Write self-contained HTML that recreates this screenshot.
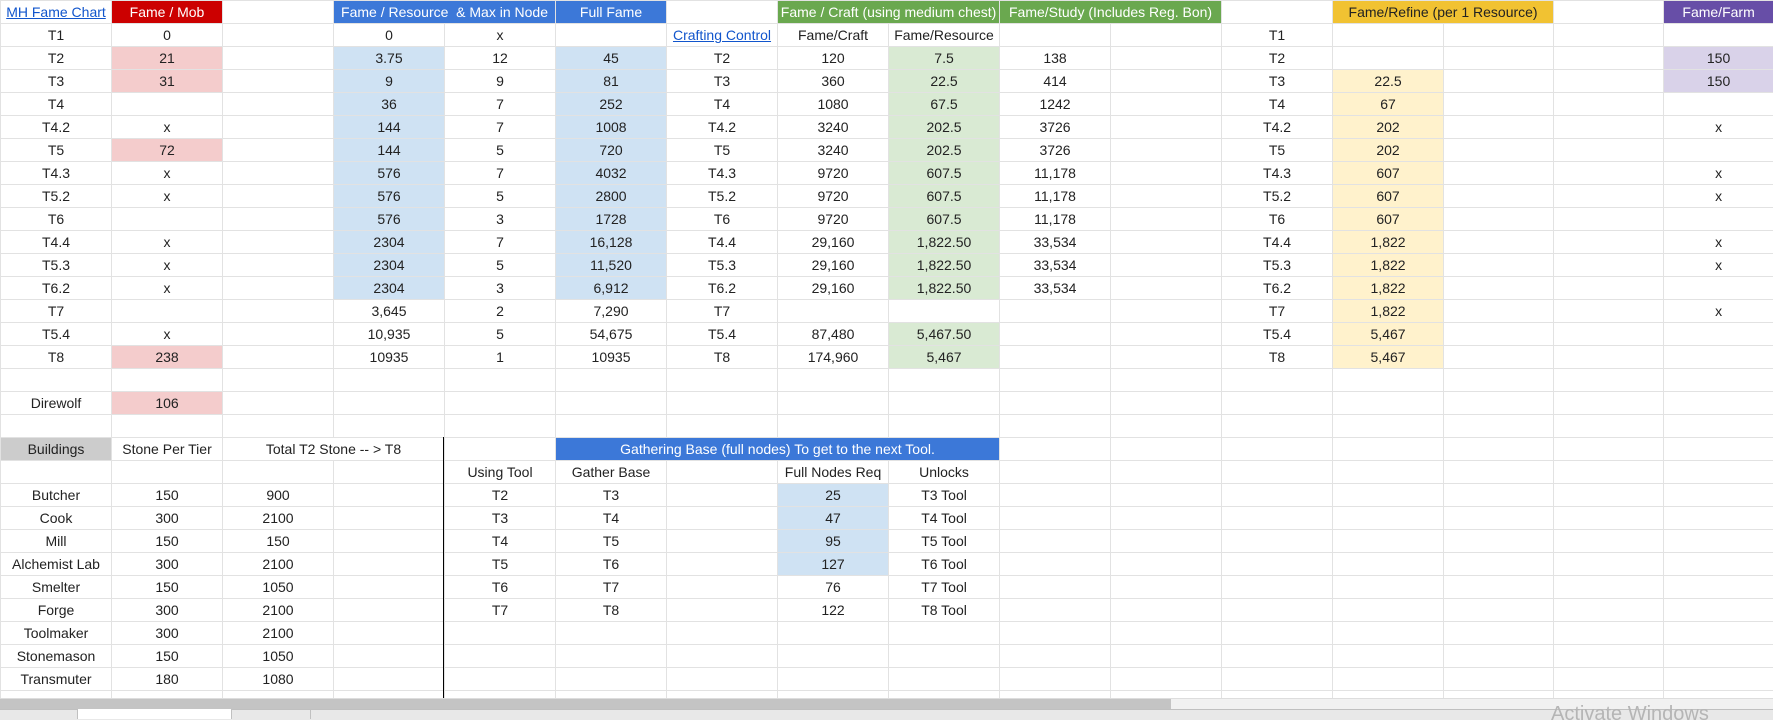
<!DOCTYPE html>
<html><head><meta charset="utf-8"><style>
html,body{margin:0;padding:0;background:#fff;width:1773px;height:719px;overflow:hidden}
#wrap{position:absolute;left:0;top:0;width:1773px;height:698px;overflow:hidden}
table{border-collapse:collapse;table-layout:fixed;width:1773px}
td{border:1px solid #e2e2e2;height:22px;padding:0;text-align:center;font:14px "Liberation Sans",Arial,sans-serif;color:#222;white-space:nowrap;overflow:hidden}
.r{background:#f4cccc}.b{background:#cfe2f3}.g{background:#d9ead3}.y{background:#fff2cc}.p{background:#d9d2e9}
.hr{background:#cc0000;color:#fff}.hb{background:#3c78d8;color:#fff}.hg{background:#6aa84f;color:#fff}.hy{background:#f1c232;color:#222}.hp{background:#674ea7;color:#fff}
.gray{background:#cccccc}
a{color:#1155cc;text-decoration:underline}
#vl{position:absolute;left:443px;top:437px;width:1px;height:261px;background:#000}
#sb{position:absolute;left:0;top:698px;width:1773px;height:11px;background:#f1f1f1;border-top:1px solid #ddd}
#sbt{position:absolute;left:0;top:699px;width:1171px;height:10px;background:#c4c4c4}
#tabs{position:absolute;left:0;top:709px;width:1773px;height:10px;background:#e8e8e8;border-top:1px solid #c0c0c0}
#tab{position:absolute;left:77px;top:709px;width:153px;height:10px;background:#fff;border-left:1px solid #c0c0c0;border-right:1px solid #c0c0c0}
#tab2{position:absolute;left:310px;top:710px;width:1px;height:9px;background:#c0c0c0}
#aw{position:absolute;left:1551px;top:703px;font:20px "Liberation Sans",sans-serif;color:#b5b5b5}
</style></head><body>
<div id="wrap"><table>
<colgroup><col style="width:111px"><col style="width:111px"><col style="width:111px"><col style="width:111px"><col style="width:111px"><col style="width:111px"><col style="width:111px"><col style="width:111px"><col style="width:111px"><col style="width:111px"><col style="width:111px"><col style="width:111px"><col style="width:111px"><col style="width:110px"><col style="width:110px"><col style="width:110px"></colgroup>
<tr><td><a>MH Fame Chart</a></td><td class="hr">Fame / Mob</td><td></td><td class="hb" colspan="2">Fame / Resource &nbsp;&amp; Max in Node</td><td class="hb">Full Fame</td><td></td><td class="hg" colspan="2">Fame / Craft (using medium chest)</td><td class="hg" colspan="2">Fame/Study (Includes Reg. Bon)</td><td></td><td class="hy" colspan="2">Fame/Refine (per 1 Resource)</td><td></td><td class="hp">Fame/Farm</td></tr>
<tr><td>T1</td><td>0</td><td></td><td>0</td><td>x</td><td></td><td><a>Crafting Control</a></td><td>Fame/Craft</td><td>Fame/Resource</td><td></td><td></td><td>T1</td><td></td><td></td><td></td><td></td></tr>
<tr><td>T2</td><td class="r">21</td><td></td><td class="b">3.75</td><td>12</td><td class="b">45</td><td>T2</td><td>120</td><td class="g">7.5</td><td>138</td><td></td><td>T2</td><td></td><td></td><td></td><td class="p">150</td></tr>
<tr><td>T3</td><td class="r">31</td><td></td><td class="b">9</td><td>9</td><td class="b">81</td><td>T3</td><td>360</td><td class="g">22.5</td><td>414</td><td></td><td>T3</td><td class="y">22.5</td><td></td><td></td><td class="p">150</td></tr>
<tr><td>T4</td><td></td><td></td><td class="b">36</td><td>7</td><td class="b">252</td><td>T4</td><td>1080</td><td class="g">67.5</td><td>1242</td><td></td><td>T4</td><td class="y">67</td><td></td><td></td><td></td></tr>
<tr><td>T4.2</td><td>x</td><td></td><td class="b">144</td><td>7</td><td class="b">1008</td><td>T4.2</td><td>3240</td><td class="g">202.5</td><td>3726</td><td></td><td>T4.2</td><td class="y">202</td><td></td><td></td><td>x</td></tr>
<tr><td>T5</td><td class="r">72</td><td></td><td class="b">144</td><td>5</td><td class="b">720</td><td>T5</td><td>3240</td><td class="g">202.5</td><td>3726</td><td></td><td>T5</td><td class="y">202</td><td></td><td></td><td></td></tr>
<tr><td>T4.3</td><td>x</td><td></td><td class="b">576</td><td>7</td><td class="b">4032</td><td>T4.3</td><td>9720</td><td class="g">607.5</td><td>11,178</td><td></td><td>T4.3</td><td class="y">607</td><td></td><td></td><td>x</td></tr>
<tr><td>T5.2</td><td>x</td><td></td><td class="b">576</td><td>5</td><td class="b">2800</td><td>T5.2</td><td>9720</td><td class="g">607.5</td><td>11,178</td><td></td><td>T5.2</td><td class="y">607</td><td></td><td></td><td>x</td></tr>
<tr><td>T6</td><td></td><td></td><td class="b">576</td><td>3</td><td class="b">1728</td><td>T6</td><td>9720</td><td class="g">607.5</td><td>11,178</td><td></td><td>T6</td><td class="y">607</td><td></td><td></td><td></td></tr>
<tr><td>T4.4</td><td>x</td><td></td><td class="b">2304</td><td>7</td><td class="b">16,128</td><td>T4.4</td><td>29,160</td><td class="g">1,822.50</td><td>33,534</td><td></td><td>T4.4</td><td class="y">1,822</td><td></td><td></td><td>x</td></tr>
<tr><td>T5.3</td><td>x</td><td></td><td class="b">2304</td><td>5</td><td class="b">11,520</td><td>T5.3</td><td>29,160</td><td class="g">1,822.50</td><td>33,534</td><td></td><td>T5.3</td><td class="y">1,822</td><td></td><td></td><td>x</td></tr>
<tr><td>T6.2</td><td>x</td><td></td><td class="b">2304</td><td>3</td><td class="b">6,912</td><td>T6.2</td><td>29,160</td><td class="g">1,822.50</td><td>33,534</td><td></td><td>T6.2</td><td class="y">1,822</td><td></td><td></td><td></td></tr>
<tr><td>T7</td><td></td><td></td><td>3,645</td><td>2</td><td>7,290</td><td>T7</td><td></td><td></td><td></td><td></td><td>T7</td><td class="y">1,822</td><td></td><td></td><td>x</td></tr>
<tr><td>T5.4</td><td>x</td><td></td><td>10,935</td><td>5</td><td>54,675</td><td>T5.4</td><td>87,480</td><td class="g">5,467.50</td><td></td><td></td><td>T5.4</td><td class="y">5,467</td><td></td><td></td><td></td></tr>
<tr><td>T8</td><td class="r">238</td><td></td><td>10935</td><td>1</td><td>10935</td><td>T8</td><td>174,960</td><td class="g">5,467</td><td></td><td></td><td>T8</td><td class="y">5,467</td><td></td><td></td><td></td></tr>
<tr><td></td><td></td><td></td><td></td><td></td><td></td><td></td><td></td><td></td><td></td><td></td><td></td><td></td><td></td><td></td><td></td></tr>
<tr><td>Direwolf</td><td class="r">106</td><td></td><td></td><td></td><td></td><td></td><td></td><td></td><td></td><td></td><td></td><td></td><td></td><td></td><td></td></tr>
<tr><td></td><td></td><td></td><td></td><td></td><td></td><td></td><td></td><td></td><td></td><td></td><td></td><td></td><td></td><td></td><td></td></tr>
<tr><td class="gray">Buildings</td><td>Stone Per Tier</td><td colspan="2">Total T2 Stone -- &gt; T8</td><td></td><td class="hb" colspan="4">Gathering Base (full nodes) To get to the next Tool.</td><td></td><td></td><td></td><td></td><td></td><td></td><td></td></tr>
<tr><td></td><td></td><td></td><td></td><td>Using Tool</td><td>Gather Base</td><td></td><td>Full Nodes Req</td><td>Unlocks</td><td></td><td></td><td></td><td></td><td></td><td></td><td></td></tr>
<tr><td>Butcher</td><td>150</td><td>900</td><td></td><td>T2</td><td>T3</td><td></td><td class="b">25</td><td>T3 Tool</td><td></td><td></td><td></td><td></td><td></td><td></td><td></td></tr>
<tr><td>Cook</td><td>300</td><td>2100</td><td></td><td>T3</td><td>T4</td><td></td><td class="b">47</td><td>T4 Tool</td><td></td><td></td><td></td><td></td><td></td><td></td><td></td></tr>
<tr><td>Mill</td><td>150</td><td>150</td><td></td><td>T4</td><td>T5</td><td></td><td class="b">95</td><td>T5 Tool</td><td></td><td></td><td></td><td></td><td></td><td></td><td></td></tr>
<tr><td>Alchemist Lab</td><td>300</td><td>2100</td><td></td><td>T5</td><td>T6</td><td></td><td class="b">127</td><td>T6 Tool</td><td></td><td></td><td></td><td></td><td></td><td></td><td></td></tr>
<tr><td>Smelter</td><td>150</td><td>1050</td><td></td><td>T6</td><td>T7</td><td></td><td>76</td><td>T7 Tool</td><td></td><td></td><td></td><td></td><td></td><td></td><td></td></tr>
<tr><td>Forge</td><td>300</td><td>2100</td><td></td><td>T7</td><td>T8</td><td></td><td>122</td><td>T8 Tool</td><td></td><td></td><td></td><td></td><td></td><td></td><td></td></tr>
<tr><td>Toolmaker</td><td>300</td><td>2100</td><td></td><td></td><td></td><td></td><td></td><td></td><td></td><td></td><td></td><td></td><td></td><td></td><td></td></tr>
<tr><td>Stonemason</td><td>150</td><td>1050</td><td></td><td></td><td></td><td></td><td></td><td></td><td></td><td></td><td></td><td></td><td></td><td></td><td></td></tr>
<tr><td>Transmuter</td><td>180</td><td>1080</td><td></td><td></td><td></td><td></td><td></td><td></td><td></td><td></td><td></td><td></td><td></td><td></td><td></td></tr>
<tr><td></td><td></td><td></td><td></td><td></td><td></td><td></td><td></td><td></td><td></td><td></td><td></td><td></td><td></td><td></td><td></td></tr>
</table></div>
<div id="vl"></div>
<div id="sb"></div><div id="sbt"></div>
<div id="tabs"></div><div id="tab"></div><div id="tab2"></div>
<div id="aw">Activate Windows</div>
</body></html>
